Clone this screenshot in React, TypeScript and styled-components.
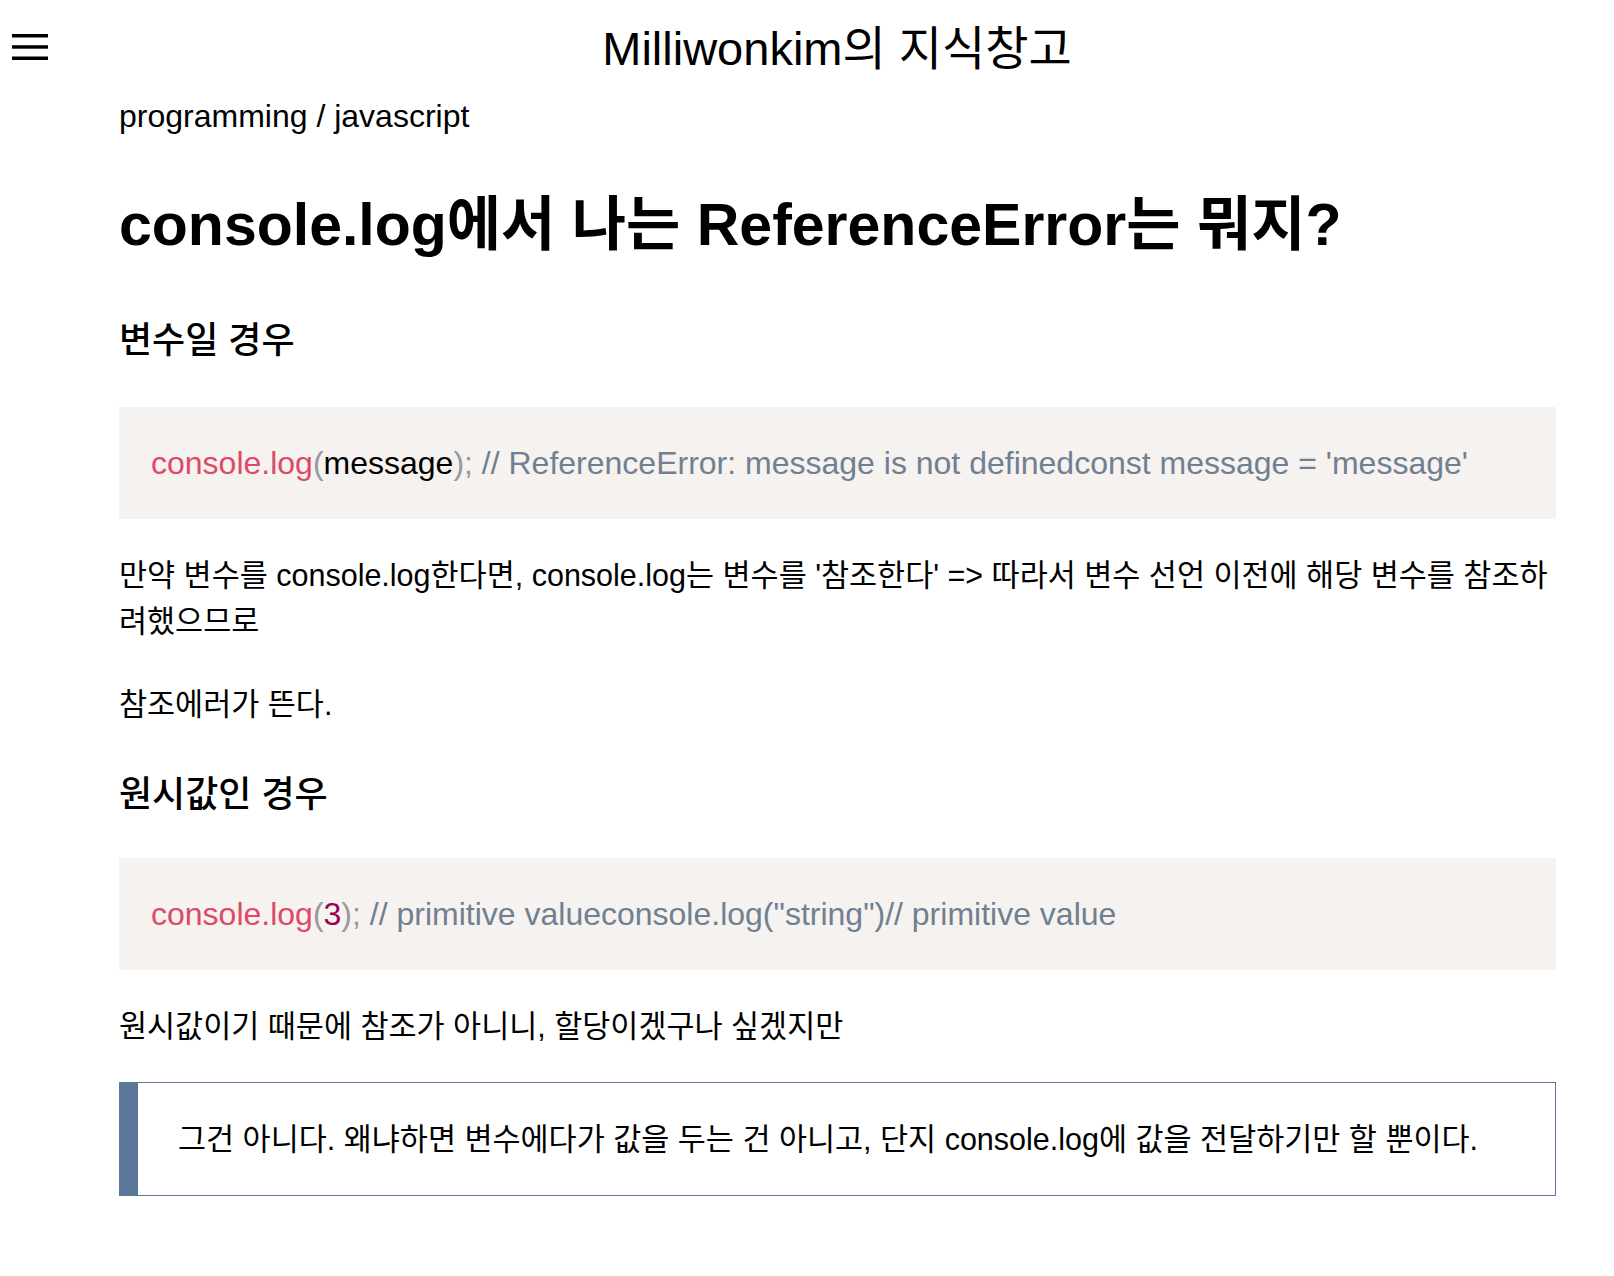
import React from 'react';
import styled, { createGlobalStyle } from 'styled-components';

const GlobalStyle = createGlobalStyle`
  html, body {
    margin: 0;
    padding: 0;
    background: #ffffff;
  }
  body {
    font-family: "Liberation Sans", "Noto Sans CJK KR", sans-serif;
    color: #000000;
    font-size: 30.5px;
  }
`;

const Page = styled.div`
  display: flex;
  flex-direction: column;
  min-height: 1276px;
`;

const Header = styled.header`
  display: flex;
  align-items: center;
  padding-top: 20px;
  height: 58px;
`;

const MenuButton = styled.button`
  width: 60px;
  height: 58px;
  padding: 0 0 0 12px;
  margin-top: -4px;
  border: none;
  background: none;
  display: flex;
  align-items: center;
  cursor: pointer;
`;

const SiteTitle = styled.h1`
  flex: 1;
  margin: 0;
  text-align: center;
  font-size: 47px;
  line-height: 58px;
  font-weight: 400;
`;

const Content = styled.main`
  display: flex;
  flex-direction: column;
  padding: 0 58px 0 119px;
`;

const Breadcrumb = styled.div`
  margin-top: 15px;
  font-size: 32px;
  line-height: 46px;
`;

const PostTitle = styled.h1`
  margin: 50px 0 0;
  font-size: 59px;
  line-height: 72px;
  font-weight: 700;
`;

const Heading = styled.h3<{ $gap: number }>`
  margin: ${p => p.$gap}px 0 0;
  font-size: 36px;
  line-height: 46px;
  font-weight: 500;
`;

const CodeBlock = styled.pre<{ $gap: number }>`
  margin: ${p => p.$gap}px 0 0;
  padding: 32px;
  background: #f5f2f0;
  font-family: inherit;
  font-size: 32px;
  line-height: 48px;
  white-space: pre-wrap;
`;

const Token = styled.span<{ $kind: 'fn' | 'punc' | 'plain' | 'comment' | 'number' }>`
  color: ${p =>
    p.$kind === 'fn'
      ? '#dd4a68'
      : p.$kind === 'punc'
      ? '#999999'
      : p.$kind === 'comment'
      ? '#708090'
      : p.$kind === 'number'
      ? '#990055'
      : '#000000'};
`;

const Paragraph = styled.p<{ $gap: number }>`
  margin: ${p => p.$gap}px 0 0;
  line-height: 46px;
`;

const Quote = styled.blockquote`
  margin: 33px 0 0;
  padding: 33px 40px;
  border: 1.5px solid #5b7899;
  border-left: 19px solid #5b7899;
  line-height: 46px;
`;

const HamburgerIcon = () => (
  <svg width="36" height="26" viewBox="0 0 36 26">
    <rect x="0" y="0" width="36" height="3.5" fill="#000" />
    <rect x="0" y="11.2" width="36" height="3.5" fill="#000" />
    <rect x="0" y="22.5" width="36" height="3.5" fill="#000" />
  </svg>
);

export default function App() {
  return (
    <Page>
      <GlobalStyle />
      <Header>
        <MenuButton aria-label="menu">
          <HamburgerIcon />
        </MenuButton>
        <SiteTitle>Milliwonkim의 지식창고</SiteTitle>
      </Header>
      <Content>
        <Breadcrumb>programming / javascript</Breadcrumb>
        <PostTitle>console.log에서 나는 ReferenceError는 뭐지?</PostTitle>

        <Heading $gap={57}>변수일 경우</Heading>
        <CodeBlock $gap={43}>
          <Token $kind="fn">console.log</Token>
          <Token $kind="punc">(</Token>
          <Token $kind="plain">message</Token>
          <Token $kind="punc">);</Token>{' '}
          <Token $kind="comment">// ReferenceError: message is not definedconst message = 'message'</Token>
        </CodeBlock>
        <Paragraph $gap={33}>
          만약 변수를 console.log한다면, console.log는 변수를 '참조한다' =&gt; 따라서 변수 선언 이전에 해당 변수를
          참조하려했으므로
        </Paragraph>
        <Paragraph $gap={37}>참조에러가 뜬다.</Paragraph>

        <Heading $gap={45}>원시값인 경우</Heading>
        <CodeBlock $gap={40}>
          <Token $kind="fn">console.log</Token>
          <Token $kind="punc">(</Token>
          <Token $kind="number">3</Token>
          <Token $kind="punc">);</Token>{' '}
          <Token $kind="comment">// primitive valueconsole.log("string")// primitive value</Token>
        </CodeBlock>
        <Paragraph $gap={33}>원시값이기 때문에 참조가 아니니, 할당이겠구나 싶겠지만</Paragraph>
        <Quote>
          그건 아니다. 왜냐하면 변수에다가 값을 두는 건 아니고, 단지 console.log에 값을 전달하기만 할 뿐이다.
        </Quote>
      </Content>
    </Page>
  );
}
